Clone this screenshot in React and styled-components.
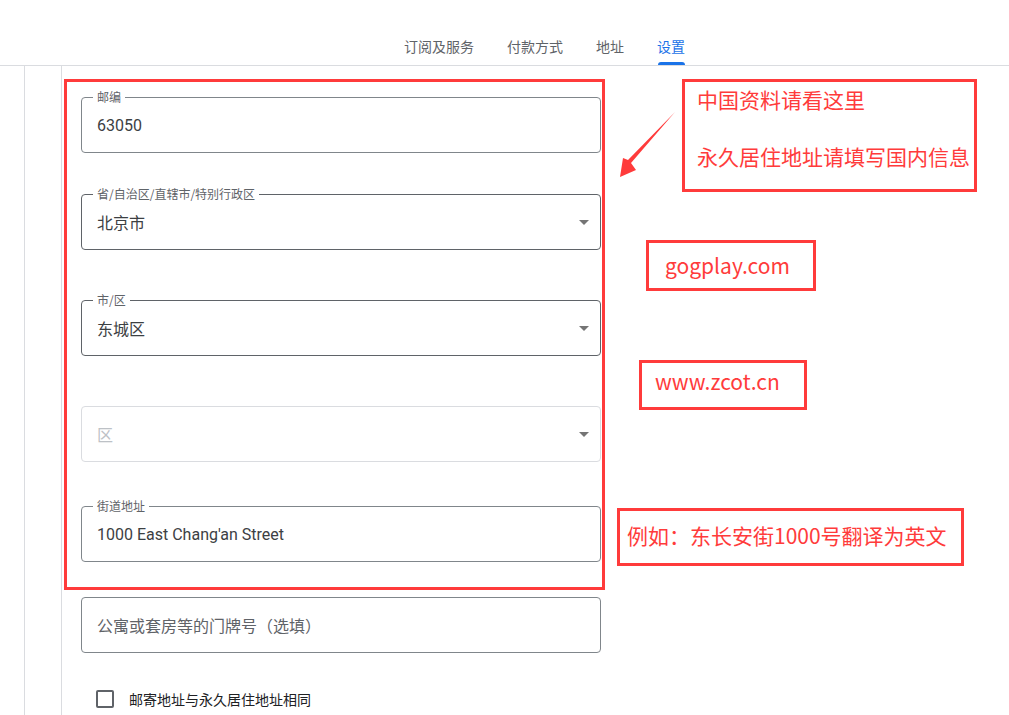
import React from "react";
import styled, { createGlobalStyle } from "styled-components";

const Global = createGlobalStyle`
  html, body { margin: 0; padding: 0; background: #fff; }
  body { font-family: Roboto, "Noto Sans CJK SC", sans-serif; color: #202124; }
  * { box-sizing: border-box; }
`;

const Page = styled.div`
  position: relative;
  width: 1009px;
  height: 715px;
  overflow: hidden;
  background: #fff;
`;

const Header = styled.header`
  height: 66px;
  border-bottom: 1px solid #dadce0;
  display: flex;
  align-items: flex-end;
  padding-left: 388px;
`;

const Tab = styled.div`
  position: relative;
  height: 36px;
  padding: 0 17px 2px 16px;
  display: flex;
  align-items: center;
  font-family: "Noto Sans CJK SC", Roboto, sans-serif;
  font-size: 14px;
  color: ${(p) => (p.$active ? "#1a73e8" : "#5f6368")};
  &::after {
    content: "";
    display: ${(p) => (p.$active ? "block" : "none")};
    position: absolute;
    left: 17px;
    right: 17px;
    bottom: 0;
    height: 3px;
    border-radius: 3px 3px 0 0;
    background: #1a73e8;
  }
`;

const Body = styled.div`
  display: flex;
  height: 649px;
`;

const Rail = styled.div`
  width: ${(p) => p.$w}px;
  border-right: 1px solid #dadce0;
  flex: none;
`;

const Content = styled.main`
  padding-left: 19px;
  display: flex;
  flex-direction: column;
`;

const Field = styled.div`
  position: relative;
  width: 520px;
  height: 56px;
  margin-top: ${(p) => p.$mt}px;
  border: 1px solid ${(p) => p.$border || "#80868b"};
  border-radius: 4px;
  display: flex;
  align-items: center;
  padding: 0 15px;
  flex: none;
`;

const Label = styled.span`
  position: absolute;
  top: -9px;
  left: 11px;
  padding: 0 4px;
  background: #fff;
  font-family: "Noto Sans CJK SC", Roboto, sans-serif;
  font-size: 12px;
  line-height: 16px;
  color: #5f6368;
`;

const Value = styled.span`
  font-family: Roboto, "Noto Sans CJK SC", sans-serif;
  font-size: 16px;
  color: ${(p) => p.$color || "#3c4043"};
  text-spacing-trim: space-all;
  flex: 1;
`;

const Caret = styled.span`
  width: 0;
  height: 0;
  border-left: 5px solid transparent;
  border-right: 5px solid transparent;
  border-top: 5px solid #757575;
  margin-right: -4px;
`;

const CheckRow = styled.label`
  display: flex;
  align-items: center;
  gap: 15px;
  margin-top: 37px;
  margin-left: 15px;
  font-family: "Noto Sans CJK SC", Roboto, sans-serif;
  font-size: 14px;
  line-height: 18px;
  color: #202124;
`;

const Box = styled.span`
  width: 18px;
  height: 18px;
  border: 2px solid #5f6368;
  border-radius: 2px;
  flex: none;
`;

const RedFrame = styled.div`
  position: absolute;
  left: 64px;
  top: 79px;
  width: 541px;
  height: 511px;
  border: 3px solid #ff3b3b;
  pointer-events: none;
`;

const Note = styled.div`
  position: absolute;
  left: ${(p) => p.$x}px;
  top: ${(p) => p.$y}px;
  width: ${(p) => p.$w}px;
  height: ${(p) => p.$h}px;
  border: 3px solid #ff3b3b;
  padding: ${(p) => p.$pad};
  display: flex;
  flex-direction: column;
  justify-content: ${(p) => (p.$top ? "flex-start" : "center")};
  font-family: "Noto Sans CJK SC", sans-serif;
  font-size: 21px;
  line-height: 28px;
  color: #ff3b3b;
  white-space: nowrap;
  text-spacing-trim: space-all;
`;

const NoteLine = styled.div`
  margin-top: ${(p) => p.$mt || 0}px;
`;

const Arrow = styled.svg`
  position: absolute;
  left: 610px;
  top: 105px;
`;

export default function App() {
  return (
    <Page>
      <Global />
      <Header>
        <Tab>订阅及服务</Tab>
        <Tab>付款方式</Tab>
        <Tab>地址</Tab>
        <Tab $active>设置</Tab>
      </Header>
      <Body>
        <Rail $w={25} />
        <Rail $w={37} />
        <Content>
          <Field $mt={31}>
            <Label>邮编</Label>
            <Value>63050</Value>
          </Field>
          <Field $mt={41} $border="#5f6368">
            <Label>省/自治区/直辖市/特别行政区</Label>
            <Value>北京市</Value>
            <Caret />
          </Field>
          <Field $mt={50} $border="#5f6368">
            <Label>市/区</Label>
            <Value>东城区</Value>
            <Caret />
          </Field>
          <Field $mt={50} $border="#dadce0">
            <Value $color="#bdc1c6">区</Value>
            <Caret />
          </Field>
          <Field $mt={44}>
            <Label>街道地址</Label>
            <Value>1000 East Chang'an Street</Value>
          </Field>
          <Field $mt={35}>
            <Value $color="#5f6368">公寓或套房等的门牌号（选填）</Value>
          </Field>
          <CheckRow>
            <Box />
            邮寄地址与永久居住地址相同
          </CheckRow>
        </Content>
      </Body>

      <RedFrame />
      <Arrow width="70" height="78" viewBox="610 105 70 78">
        <polygon
          points="675,112 631,163 636,170 620,177 623,158 628,160"
          fill="#ff3b3b"
        />
      </Arrow>
      <Note $x={682} $y={79} $w={295} $h={113} $pad="3px 0 0 12px" $top>
        <NoteLine>中国资料请看这里</NoteLine>
        <NoteLine $mt={29}>永久居住地址请填写国内信息</NoteLine>
      </Note>
      <Note $x={646} $y={240} $w={170} $h={51} $pad="0 0 2px 16px">
        gogplay.com
      </Note>
      <Note $x={639} $y={360} $w={168} $h={50} $pad="0 0 8px 13px">
        www.zcot.cn
      </Note>
      <Note $x={617} $y={508} $w={347} $h={58} $pad="0 0 4px 7px">
        例如：东长安街1000号翻译为英文
      </Note>
    </Page>
  );
}
